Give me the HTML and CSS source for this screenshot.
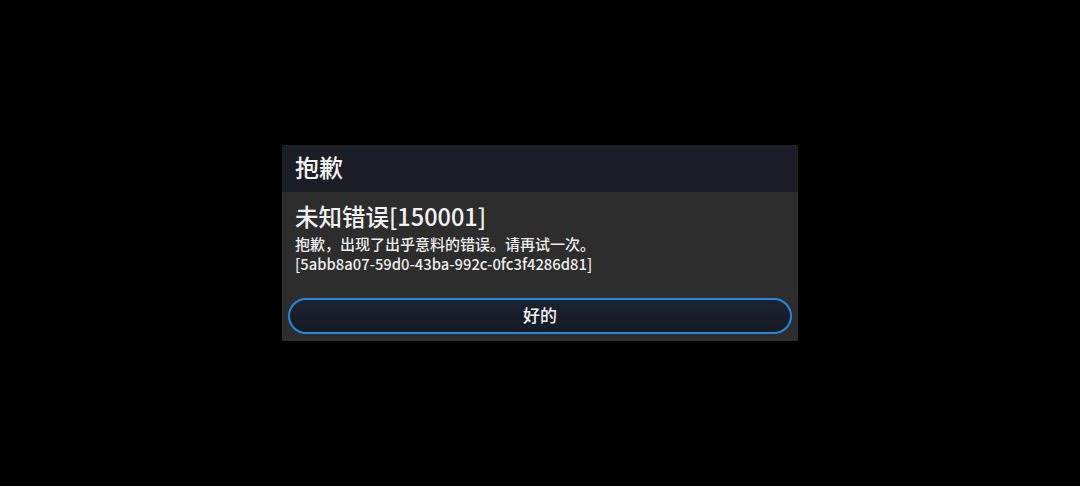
FILE: index.html
```html
<!DOCTYPE html>
<html lang="zh-CN">
<head>
<meta charset="utf-8">
<link rel="stylesheet" href="styles.css">
</head>
<body>
<div class="screen">
  <div class="dialog">
    <div class="header">抱歉</div>
    <div class="content">
      <div class="heading">未知错误[150001]</div>
      <div class="line">抱歉，出现了出乎意料的错误。请再试一次。</div>
      <div class="line code">[5abb8a07-59d0-43ba-992c-0fc3f4286d81]</div>
      <button class="ok">好的</button>
    </div>
  </div>
</div>
</body>
</html>
```
FILE: styles.css
```css
html, body {
  margin: 0;
  padding: 0;
  background: #000;
}
.screen {
  width: 1080px;
  height: 486px;
  display: flex;
  align-items: center;
  justify-content: center;
  font-family: "Noto Sans CJK SC", "Noto Sans", sans-serif;
  font-weight: 500;
  color: #f2f2f2;
}
.dialog {
  width: 516px;
  display: flex;
  flex-direction: column;
}
.header {
  height: 47px;
  box-sizing: border-box;
  background: #1b1e27;
  font-size: 24px;
  line-height: 44px;
  padding-left: 13px;
  color: #f4f4f4;
}
.content {
  background: #2d2d2d;
  padding: 10px 6px 7px 6px;
  display: flex;
  flex-direction: column;
}
.heading {
  font-size: 23.5px;
  line-height: 28px;
  padding-left: 7px;
  margin-bottom: 4px;
}
.line {
  font-size: 15px;
  line-height: 20px;
  padding-left: 7px;
  color: #ececec;
}
.code {
  font-size: 14.8px;
}
.ok {
  margin-top: 24px;
  height: 36px;
  border: 2.5px solid #2089e0;
  border-radius: 18px;
  background: linear-gradient(#1c2330, #161b24);
  color: #f2f2f2;
  font-family: inherit;
  font-weight: 500;
  font-size: 17px;
  padding: 0 0 3px 0;
  box-sizing: border-box;
}
```
